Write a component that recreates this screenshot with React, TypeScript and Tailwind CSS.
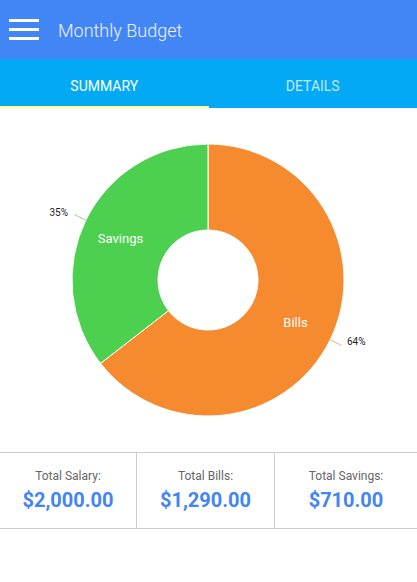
import React from "react";

const cx = 208;
const cy = 172;
const outer = 136;
const inner = 50;

function pt(angle: number, r: number) {
  const rad = (angle * Math.PI) / 180;
  return [cx + r * Math.sin(rad), cy - r * Math.cos(rad)];
}

export default function App() {
  const salary = 2000;
  const bills = 1290;
  const billsAngle = (bills / salary) * 360;
  const [oex, oey] = pt(billsAngle, outer);
  const [iex, iey] = pt(billsAngle, inner);

  const billsPath = `M${cx} ${cy - outer} A${outer} ${outer} 0 1 1 ${oex} ${oey} L${iex} ${iey} A${inner} ${inner} 0 1 0 ${cx} ${cy - inner} Z`;
  const savingsPath = `M${oex} ${oey} A${outer} ${outer} 0 0 1 ${cx} ${cy - outer} L${cx} ${cy - inner} A${inner} ${inner} 0 0 0 ${iex} ${iey} Z`;

  const billsMid = billsAngle / 2;
  const savingsMid = (billsAngle + 360) / 2;
  const [blx, bly] = pt(billsMid, 93);
  const [slx, sly] = pt(savingsMid, 93);
  const [b1x, b1y] = pt(billsMid, 136);
  const [b2x, b2y] = pt(billsMid, 149);
  const [s1x, s1y] = pt(savingsMid, 136);
  const [s2x, s2y] = pt(savingsMid, 149);

  return (
    <div className="w-[417px] h-[582px] bg-white font-['Roboto',sans-serif]">
      <header className="h-[59px] bg-[#4285f4] flex items-center">
        <div className="ml-[9px] w-[30px] flex flex-col gap-[6px]">
          <span className="block h-[3px] bg-white" />
          <span className="block h-[3px] bg-white" />
          <span className="block h-[3px] bg-white" />
        </div>
        <h1 className="ml-[19px] pt-[2px] text-[18px] text-white/90 font-light">Monthly Budget</h1>
      </header>

      <nav className="h-[49px] bg-[#03a9f4] flex">
        <div className="w-1/2 flex flex-col">
          <div className="flex-1 pt-[7px] flex items-center justify-center text-[14px] text-white uppercase">Summary</div>
          <div className="h-[2px] bg-[#ffff8d]" />
        </div>
        <div className="w-1/2 pt-[5px] flex items-center justify-center text-[14px] text-white/75 uppercase">Details</div>
      </nav>

      <svg width="417" height="344" viewBox="0 0 417 344" className="block">
        <path d={billsPath} fill="#f68a2f" stroke="#fff" strokeWidth="1" />
        <path d={savingsPath} fill="#4dd04f" stroke="#fff" strokeWidth="1" />
        <text x={slx - 4} y={sly + 4} fill="#fff" fontSize="13" textAnchor="middle" fontFamily="Roboto, sans-serif">Savings</text>
        <text x={blx + 4} y={bly + 6} fill="#fff" fontSize="13" textAnchor="middle" fontFamily="Roboto, sans-serif">Bills</text>
        <line x1={s1x} y1={s1y} x2={s2x} y2={s2y} stroke="#8fe090" strokeWidth="1" />
        <line x1={b1x} y1={b1y} x2={b2x} y2={b2y} stroke="#f9b47a" strokeWidth="1" />
        <text x={68} y={108} fill="#222" fontSize="10" textAnchor="end" fontFamily="Roboto, sans-serif">35%</text>
        <text x={347} y={237} fill="#222" fontSize="10" fontFamily="Roboto, sans-serif">64%</text>
      </svg>

      <div className="grid grid-cols-[136px_138px_1fr] border-y border-[#cccccc] h-[77px]">
        <SummaryCell label="Total Salary:" value="$2,000.00" />
        <SummaryCell label="Total Bills:" value="$1,290.00" border />
        <SummaryCell label="Total Savings:" value="$710.00" border />
      </div>
    </div>
  );
}

type SummaryCellProps = {
  label: string;
  value: string;
  border?: boolean;
};

function SummaryCell({ label, value, border }: SummaryCellProps) {
  return (
    <div className={`flex flex-col items-center justify-center ${border ? "border-l border-[#cccccc]" : ""}`}>
      <p className="text-[12px] text-[#666] leading-[15px]">{label}</p>
      <p className="mt-[4px] text-[20px] font-bold text-[#4285f4] leading-[24px]">{value}</p>
    </div>
  );
}
